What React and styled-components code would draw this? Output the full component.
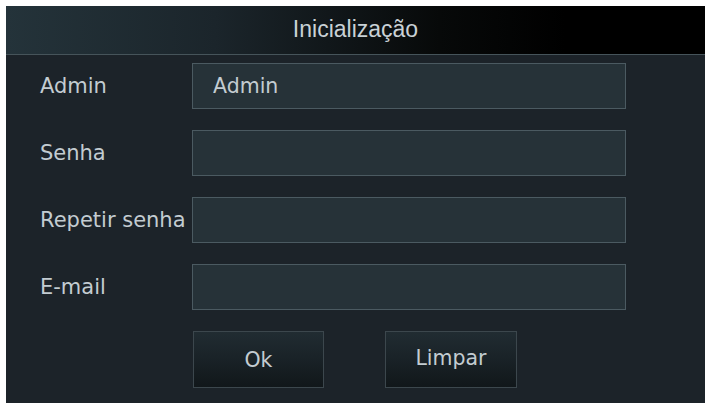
import React from "react";
import styled, { createGlobalStyle } from "styled-components";

const Global = createGlobalStyle`
  html, body { margin: 0; padding: 0; background: #ffffff; }
  body { width: 715px; height: 407px; overflow: hidden; }
  * { box-sizing: border-box; }
`;

const Page = styled.div`
  padding: 6px 0 0 6px;
`;

const Panel = styled.div`
  width: 699px;
  height: 397px;
  background: #1c2329;
  display: flex;
  flex-direction: column;
`;

const TitleBar = styled.div`
  height: 49px;
  flex: none;
  display: flex;
  align-items: center;
  justify-content: center;
  background: linear-gradient(90deg, #24333a 0%, #1b252b 30%, #070909 62%, #000000 80%);
  border-bottom: 1px solid #46545a;
  padding-bottom: 1px;
`;

const Title = styled.h1`
  margin: 0;
  font-family: "Liberation Sans", Arial, sans-serif;
  font-weight: 400;
  font-size: 23px;
  color: #c9d1d6;
`;

const Form = styled.div`
  display: grid;
  grid-template-columns: 186px 434px;
  grid-auto-rows: 46px;
  row-gap: 21px;
  padding-top: 8px;
`;

const Label = styled.label`
  display: flex;
  align-items: center;
  padding-left: 34px;
  font-family: "DejaVu Sans", Verdana, sans-serif;
  font-size: 21px;
  color: #c3ccd1;
  white-space: nowrap;
`;

const Field = styled.input`
  width: 100%;
  height: 46px;
  margin: 0;
  background: #263238;
  border: 1px solid #4b5a61;
  padding: 0 0 0 20px;
  font-family: "DejaVu Sans", Verdana, sans-serif;
  font-size: 20.5px;
  color: #c3ccd1;
  outline: none;
`;

const Buttons = styled.div`
  display: flex;
  gap: 61px;
  padding-left: 187px;
  padding-top: 21px;
`;

const Button = styled.button`
  width: ${(p) => p.$w}px;
  height: 57px;
  margin: 0;
  padding: 0 0 ${(p) => p.$lift}px 0;
  background: linear-gradient(180deg, #212c32 0%, #1a2328 45%, #11171a 100%);
  border: 1px solid #3c474d;
  font-family: "DejaVu Sans", Verdana, sans-serif;
  font-size: 20.5px;
  color: #c3ccd1;
  cursor: pointer;
`;

const rows = [
  { label: "Admin", value: "Admin" },
  { label: "Senha", value: "" },
  { label: "Repetir senha", value: "" },
  { label: "E-mail", value: "" },
];

export default function App() {
  return (
    <>
      <Global />
      <Page>
        <Panel>
          <TitleBar>
            <Title>Inicialização</Title>
          </TitleBar>
          <Form>
            {rows.map((r) => (
              <React.Fragment key={r.label}>
                <Label>{r.label}</Label>
                <Field readOnly value={r.value} />
              </React.Fragment>
            ))}
          </Form>
          <Buttons>
            <Button $w={131} $lift={0}>Ok</Button>
            <Button $w={132} $lift={4}>Limpar</Button>
          </Buttons>
        </Panel>
      </Page>
    </>
  );
}
